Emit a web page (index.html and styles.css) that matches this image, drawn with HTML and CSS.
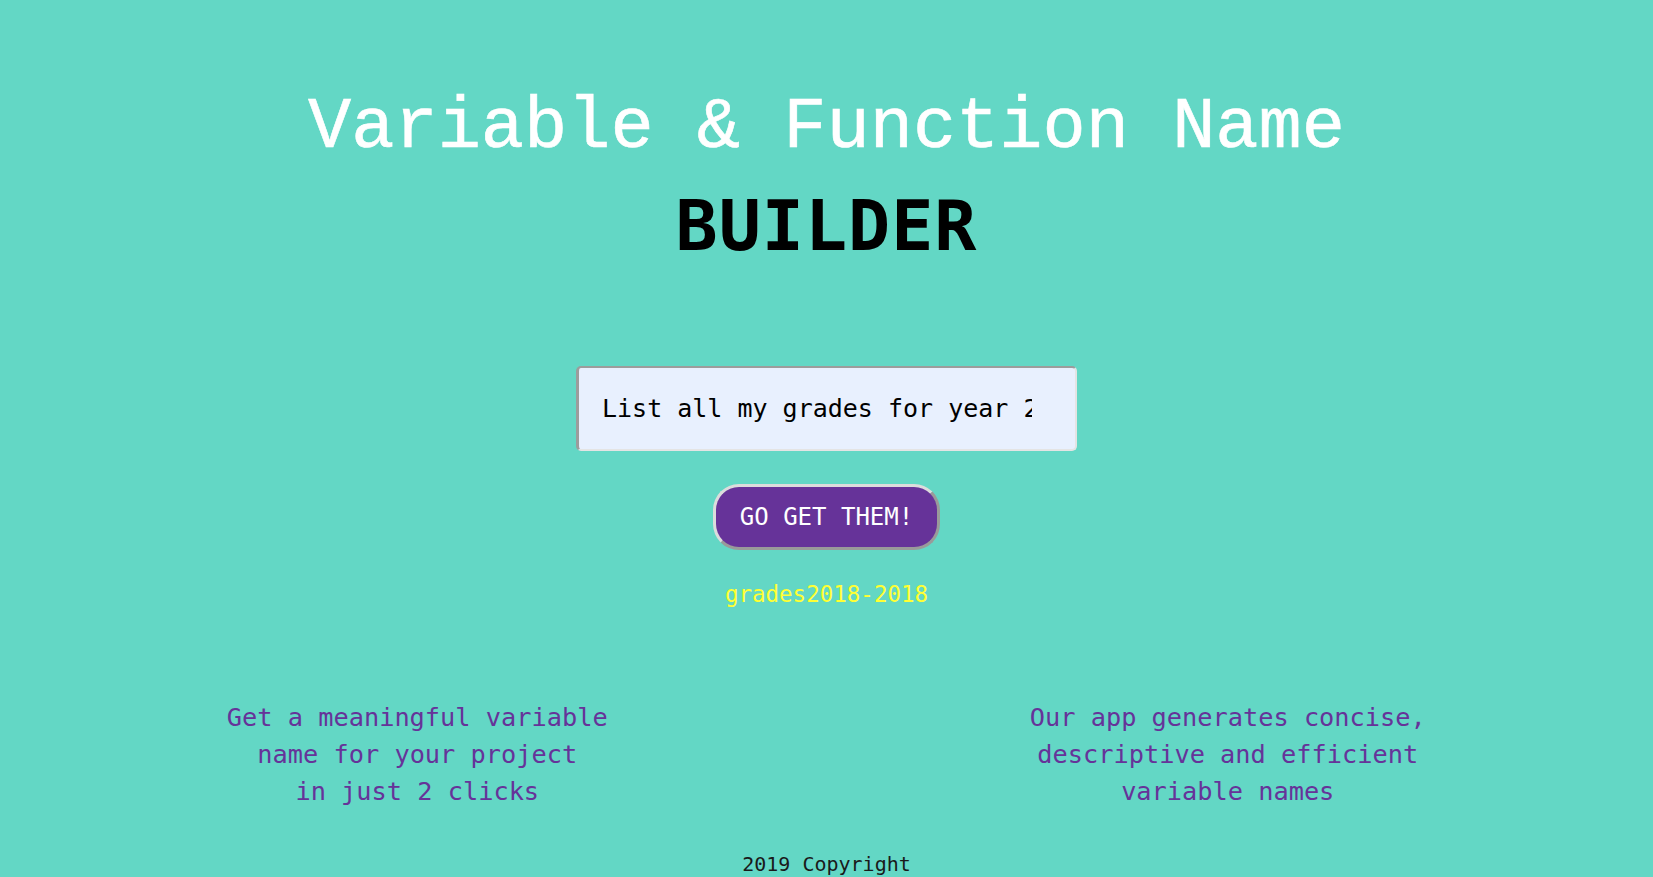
FILE: index.html
```html
<!DOCTYPE html>
<html lang="en">
<head>
<meta charset="utf-8">
<title>Variable &amp; Function Name Builder</title>
<link rel="stylesheet" href="styles.css">
</head>
<body>
<main class="page">
  <header class="hero">
    <h1 class="title">Variable &amp; Function Name</h1>
    <h2 class="subtitle">BUILDER</h2>
  </header>
  <form class="builder">
    <input class="query" type="text" value="List all my grades for year 2018">
    <button class="go" type="button">GO GET THEM!</button>
    <p class="result">grades2018-2018</p>
  </form>
  <section class="features">
    <p class="feature">Get a meaningful variable<br>name for your project<br>in just 2 clicks</p>
    <p class="feature">Our app generates concise,<br>descriptive and efficient<br>variable names</p>
  </section>
  <footer class="footer">2019 Copyright</footer>
</main>
</body>
</html>
```

FILE: styles.css
```css
html, body {
  margin: 0;
  padding: 0;
  background: #63d7c5;
}

body {
  font-family: "DejaVu Sans Mono", "Liberation Mono", monospace;
  color: #111;
}

.page {
  display: flex;
  flex-direction: column;
  align-items: center;
  padding: 88px 0 0;
}

.hero {
  display: flex;
  flex-direction: column;
  align-items: center;
}

.title {
  margin: 0;
  font-family: "Liberation Mono", monospace;
  font-weight: normal;
  font-size: 72px;
  line-height: 80px;
  color: #ffffff;
  white-space: nowrap;
  -webkit-text-stroke: 0.6px #ffffff;
}

.subtitle {
  margin: 18px 0 0;
  font-family: "DejaVu Sans Mono", monospace;
  font-weight: bold;
  font-size: 70px;
  line-height: 80px;
  color: #000;
  letter-spacing: 1px;
}

.builder {
  display: flex;
  flex-direction: column;
  align-items: center;
  margin-top: 100px;
}

.query {
  box-sizing: border-box;
  width: 501px;
  height: 85px;
  padding: 0 43px 0 23px;
  border-style: solid;
  border-width: 2px 2px 2px 3px;
  border-color: #9c9c9c #e4e4e4 #e4e4e4 #9c9c9c;
  border-radius: 5px;
  background: #e8f0fe;
  font-family: "DejaVu Sans Mono", monospace;
  font-size: 25px;
  color: #000;
  outline: none;
}

.go {
  box-sizing: border-box;
  margin-top: 33px;
  width: 227px;
  height: 66px;
  padding: 0;
  border: 3px solid;
  border-color: #dcdcdc #9a9a9a #9a9a9a #dcdcdc;
  border-radius: 26px;
  background: #663399;
  color: #ffffff;
  font-family: "DejaVu Sans Mono", monospace;
  font-size: 24px;
  cursor: pointer;
}

.result {
  margin: 29px 0 0;
  font-size: 22.5px;
  line-height: 30px;
  color: #ffff33;
}

.features {
  align-self: stretch;
  display: grid;
  grid-template-columns: 1fr 1fr;
  margin: 90px 20px 0 12px;
}

.feature {
  margin: 0;
  text-align: center;
  font-size: 25.3px;
  line-height: 37px;
  color: #663399;
}

.footer {
  margin-top: 40px;
  font-size: 20px;
  line-height: 28px;
  color: #1a1a1a;
}
```
